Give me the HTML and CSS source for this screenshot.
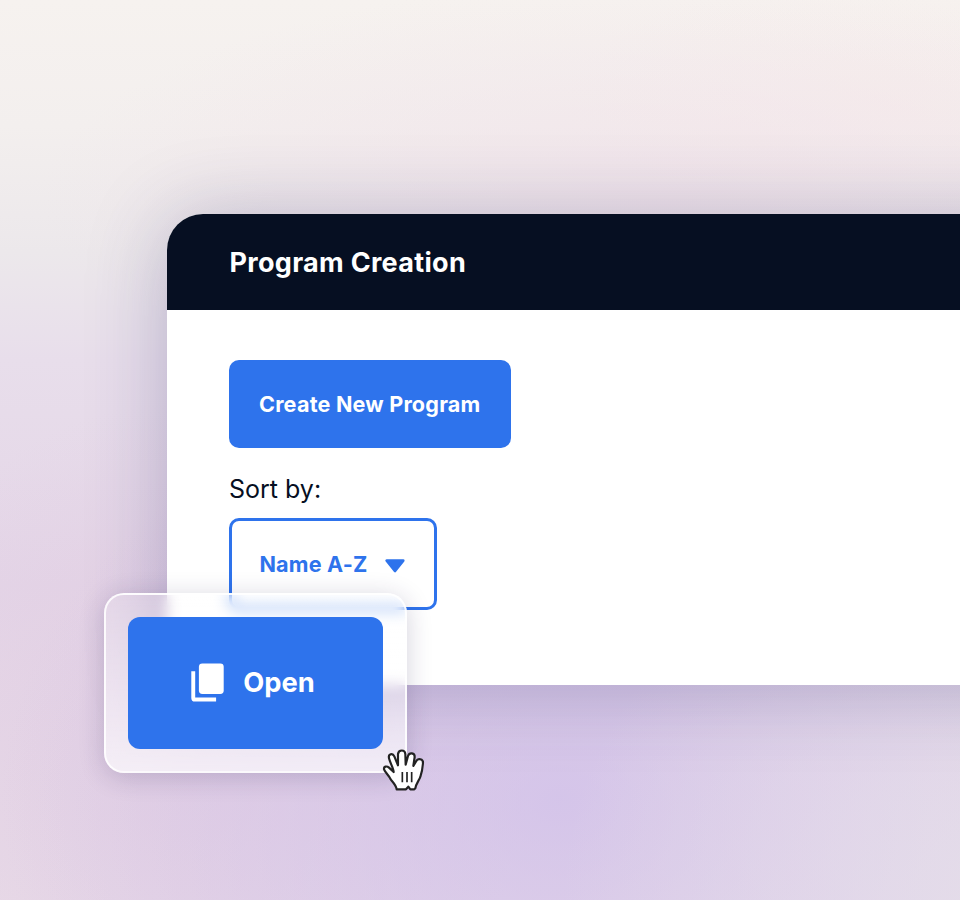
FILE: index.html
```
<!DOCTYPE html>
<html lang="en">
<head>
  <meta charset="utf-8">
  <title>Program Creation</title>
  <link rel="stylesheet" href="styles.css">
</head>
<body>
  <main class="panel">
    <header class="panel-header">
      <h1>Program Creation</h1>
    </header>
    <div class="panel-body">
      <button type="button" class="btn btn-create">Create New Program</button>
      <span class="sort-label">Sort by:</span>
      <button type="button" class="btn btn-sort">
        Name A-Z
        <svg class="caret" width="20" height="14" viewBox="0 0 20 14">
          <path d="M1.8 1.6h16.4L10 12z" fill="currentColor" stroke="currentColor" stroke-width="2.8" stroke-linejoin="round"/>
        </svg>
      </button>
    </div>
  </main>

  <!-- dragged button -->
  <div class="drag-card">
    <button type="button" class="btn btn-open">
      <svg class="copy-icon" width="33" height="39" viewBox="0 0 33 39">
        <rect x="7.9" y="0.4" width="24.8" height="30.6" rx="3.4" fill="#fff"/>
        <path d="M0.3 8.2h3.9v26.4h20.9v3.9H3.9a3.6 3.6 0 0 1-3.6-3.6z" fill="#fff"/>
      </svg>
      Open
    </button>
    <svg class="hand" width="44" height="42" viewBox="36 39 132 126">
      <path d="M80 160C79 148 68 138 62 130C57 118 44 108 42 100C41 91 50 89 57 95L71 108C70 96 60 80 57 67C54 53 68 50 73 61L84 88L84 54C86 40 105 40 106 54L107 86L114 60C118 48 135 50 134 63L130 90L139 75C143 66 160 68 159 81C158 92 157 105 152 119C149 132 138 142 136 157L133 160H121L115 152L108 160Z" fill="#fff" stroke="#222" stroke-width="6.5" stroke-linejoin="round"/>
      <path d="M97 108v31M111 108v31M125 108v31" fill="none" stroke="#222" stroke-width="5"/>
    </svg>
  </div>
</body>
</html>
```
FILE: styles.css
```
* { box-sizing:border-box }
html { overflow:hidden }
body {
  margin:0;
  height:900px;
  overflow:clip;
  padding:214.4px 0 0 166.5px;
  font-family:Inter, "Liberation Sans", sans-serif;
  background:
    radial-gradient(ellipse 480px 400px at 1040px 900px, rgba(228,222,234,.85), rgba(228,222,234,0)),
    radial-gradient(ellipse 560px 420px at 560px 800px, rgba(205,188,234,.7), rgba(205,188,234,0)),
    radial-gradient(ellipse 340px 360px at 190px 760px, rgba(222,198,222,.5), rgba(222,198,222,0)),
    radial-gradient(ellipse 620px 220px at 660px 200px, rgba(241,224,233,.65), rgba(241,224,233,0)),
    radial-gradient(ellipse 340px 130px at 900px 100px, rgba(248,232,232,.35), rgba(248,232,232,0)),
    linear-gradient(#f6f2ef 0, #f3efee 14%, #ece8eb 28%, #e8deeb 40%, #e4d5e7 65%, #e8dbe8 100%)
}
.panel {
  height:471px;
  margin-right:-120px; /* bleeds off the right edge */
  border-radius:36px 0 0 0;
  background:#fff;
  box-shadow:0 4px 80px rgba(50,50,110,.28)
}
.panel-header {
  display:flex;
  align-items:center;
  height:96px;
  padding-left:63px;
  border-radius:36px 0 0 0;
  background:#060f22
}
h1 { margin:0; color:#fff; font-size:27px; font-weight:700; letter-spacing:.3px }
.panel-body {
  display:flex;
  flex-direction:column;
  align-items:flex-start;
  padding:50px 0 0 62.5px
}
.btn {
  display:flex;
  align-items:center;
  justify-content:center;
  padding:0;
  border:0;
  color:#fff;
  background:#2e73ec;
  font-family:inherit;
  font-weight:700
}
.btn-create {
  width:281.5px;
  height:87.5px;
  border-radius:10px;
  font-size:21.6px;
  letter-spacing:.2px
}
.sort-label {
  margin:24.5px 0 12px 0;
  color:#060f22;
  font-size:25px;
  line-height:34px
}
.btn-sort {
  gap:17px;
  width:208px;
  height:92px;
  padding:0 2px 1px 0;
  border:3px solid #2e73ec;
  border-radius:10px;
  color:#2e73ec;
  background:#fff;
  font-size:21.6px;
  letter-spacing:.2px
}
.caret { margin-top:4px }
.drag-card {
  position:absolute;
  left:103.5px;
  top:592.5px;
  width:303px;
  height:180px;
  padding:22px;
  border:2px solid rgba(255,255,255,.85);
  border-radius:20px;
  background:linear-gradient(rgba(255,255,255,.2), rgba(255,255,255,.65));
  backdrop-filter:blur(7px);
  box-shadow:0 4px 26px rgba(40,30,80,.2)
}
.btn-open {
  gap:19px;
  width:255px;
  height:132px;
  padding-right:4px;
  border-radius:12px;
  font-size:27.3px
}
.hand { position:absolute; left:276.5px; top:154px }
```
